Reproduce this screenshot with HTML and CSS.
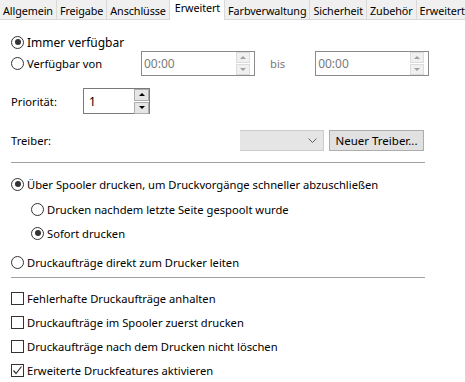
FILE: index.html
```html
<!DOCTYPE html>
<html lang="de">
<head>
  <meta charset="UTF-8">
  <title>Druckereigenschaften - Erweitert</title>
  <link rel="stylesheet" href="styles.css">
</head>
<body>

  <!-- TABS -->
  <div class="tabs">
    <div class="tab">Allgemein</div>
    <div class="tab">Freigabe</div>
    <div class="tab">Anschlüsse</div>
    <div class="tab active">Erweitert</div>
    <div class="tab">Farbverwaltung</div>
    <div class="tab">Sicherheit</div>
    <div class="tab">Zubehör</div>
    <div class="tab">Erweitert</div>
  </div>

  <!-- PAGE CONTENT -->
  <div class="panel">

    <label class="row row-always">
      <span class="radio checked"></span>
      Immer verfügbar
    </label>

    <div class="row row-from">
      <label class="from-label">
        <span class="radio"></span>
        Verfügbar von
      </label>
      <div class="spin disabled">
        <span class="spin-value">00:00</span>
        <div class="spin-buttons">
          <span class="spin-up"></span>
          <span class="spin-down"></span>
        </div>
      </div>
      <span class="bis">bis</span>
      <div class="spin disabled">
        <span class="spin-value">00:00</span>
        <div class="spin-buttons">
          <span class="spin-up"></span>
          <span class="spin-down"></span>
        </div>
      </div>
    </div>

    <div class="row row-prio">
      <span class="field-label">Priorität:</span>
      <div class="spin prio">
        <span class="spin-value">1</span>
        <div class="spin-buttons">
          <span class="spin-up"></span>
          <span class="spin-down"></span>
        </div>
      </div>
    </div>

    <div class="row row-driver">
      <span class="field-label">Treiber:</span>
      <div class="combo">
        <svg width="9" height="5" viewBox="0 0 9 5"><polyline points="0.5,0.5 4.5,4.5 8.5,0.5" fill="none" stroke="#606060" stroke-width="1"/></svg>
      </div>
      <button class="btn">Neuer Treiber...</button>
    </div>

    <div class="separator sep-1"></div>

    <label class="row r-spool">
      <span class="radio checked"></span>
      Über Spooler drucken, um Druckvorgänge schneller abzuschließen
    </label>
    <label class="row indent r-after">
      <span class="radio"></span>
      Drucken nachdem letzte Seite gespoolt wurde
    </label>
    <label class="row indent r-now">
      <span class="radio checked"></span>
      Sofort drucken
    </label>
    <label class="row r-direct">
      <span class="radio"></span>
      Druckaufträge direkt zum Drucker leiten
    </label>

    <div class="separator sep-2"></div>

    <label class="row cb-row first">
      <span class="checkbox"></span>
      Fehlerhafte Druckaufträge anhalten
    </label>
    <label class="row cb-row">
      <span class="checkbox"></span>
      Druckaufträge im Spooler zuerst drucken
    </label>
    <label class="row cb-row">
      <span class="checkbox"></span>
      Druckaufträge nach dem Drucken nicht löschen
    </label>
    <label class="row cb-row">
      <span class="checkbox checked">
        <svg width="11" height="11" viewBox="0 0 11 11"><polyline points="1.5,5.5 4,8.5 9.5,1.5" fill="none" stroke="#333" stroke-width="1.2"/></svg>
      </span>
      Erweiterte Druckfeatures aktivieren
    </label>

  </div>

</body>
</html>
```

FILE: styles.css
```css
body {
  font-family: "Noto Sans", "Liberation Sans", sans-serif;
  font-size: 11.2px;
  color: #000;
  background: #fff;
  margin: 0;
  padding: 0;
  overflow: hidden;
}

/* --- TABS --- */
.tabs {
  display: flex;
  height: 19px;
  border-bottom: 1px solid #d9d9d9;
  white-space: nowrap;
  font-size: 10.8px;
  letter-spacing: -0.1px;
}

.tab {
  flex: none;
  padding: 2px 3px 0 3px;
  line-height: 17px;
  background: #f0f0f0;
  border-right: 1px solid #d9d9d9;
}

.tab.active {
  background: #fff;
  height: 20px;
  padding: 0 4px 0 5px;
  line-height: 16px;
  border-left: 1px solid #d9d9d9;
  margin-left: -1px;
}

/* --- PAGE CONTENT --- */
.panel {
  padding-left: 11px;
  display: flex;
  flex-direction: column;
}

.row {
  display: flex;
  align-items: center;
  height: 20px;
  white-space: nowrap;
}

.radio {
  flex: none;
  width: 11px;
  height: 11px;
  border: 1px solid #333;
  border-radius: 50%;
  margin-right: 3px;
  position: relative;
  background: #fff;
}

.radio.checked::after {
  content: "";
  position: absolute;
  left: 2.5px;
  top: 2.5px;
  width: 6px;
  height: 6px;
  border-radius: 50%;
  background: #333;
}

.checkbox {
  flex: none;
  width: 11px;
  height: 11px;
  border: 1px solid #333;
  margin-right: 3px;
  display: flex;
  align-items: center;
  justify-content: center;
}

.indent {
  padding-left: 20px;
}

.row-always {
  margin-top: 12px;
  font-size: 12px;
}

.row-from {
  margin-top: -1px;
  height: 25px;
}

.from-label {
  display: flex;
  align-items: center;
  width: 130px;
}

.field-label {
  width: 72px;
}

/* spin boxes */
.spin {
  display: flex;
  align-items: center;
  justify-content: space-between;
  width: 112px;
  height: 23px;
  border: 1px solid #8a8a8a;
  background: #fff;
}

.spin-value {
  padding-left: 2px;
  font-size: 12px;
}

.spin.disabled .spin-value {
  color: #7a7a7a;
}

.spin-buttons {
  display: flex;
  flex-direction: column;
  margin-right: 4px;
  gap: 1px;
}

.spin-buttons span {
  display: flex;
  align-items: center;
  justify-content: center;
  width: 12px;
  height: 9px;
  border: 1px solid #dcdcdc;
  background: #f0f0f0;
}

.spin-up::before,
.spin-down::before {
  content: "";
  border-left: 3px solid transparent;
  border-right: 3px solid transparent;
}

.spin-up::before {
  border-bottom: 3px solid #a0a0a0;
}

.spin-down::before {
  border-top: 3px solid #a0a0a0;
}

.spin.prio {
  width: 65px;
  height: 24px;
  border-color: #7a7a7a;
}

.spin.prio .spin-value {
  padding-left: 5px;
}

.spin.prio .spin-buttons {
  margin-right: 0;
}

.spin.prio .spin-buttons span {
  width: 13px;
  height: 10px;
  border-color: #adadad;
  background: #e5e5e5;
}

.spin.prio .spin-up::before {
  border-bottom-color: #000;
}

.spin.prio .spin-down::before {
  border-top-color: #000;
}

.bis {
  color: #7a7a7a;
  margin: 0 30px 0 15px;
}

.row-prio {
  margin-top: 12px;
  height: 26px;
}

/* driver row */
.row-driver {
  margin-top: 16px;
  height: 21px;
}

.row-driver .field-label {
  width: 229px;
}

.combo {
  box-sizing: border-box;
  width: 84px;
  height: 21px;
  background: #e5e5e5;
  border: 1px solid #cccccc;
  border-left: none;
  display: flex;
  align-items: center;
  justify-content: flex-end;
  padding-right: 6px;
}

.btn {
  box-sizing: border-box;
  margin-left: 5px;
  width: 95px;
  height: 21px;
  background: #e1e1e1;
  border: 1px solid #adadad;
  font-family: inherit;
  font-size: 11.5px;
  color: #000;
  padding: 0;
}

.separator {
  width: 414px;
  height: 1px;
  background: #a0a0a0;
}

.sep-1 {
  margin-top: 11px;
}

.r-spool {
  margin-top: 11px;
}

.r-after {
  margin-top: 5px;
}

.r-now {
  margin-top: 4px;
}

.r-direct {
  margin-top: 9px;
}

.sep-2 {
  margin-top: 5px;
}

.cb-row {
  margin-top: 4px;
}

.cb-row.first {
  margin-top: 10px;
}
```
